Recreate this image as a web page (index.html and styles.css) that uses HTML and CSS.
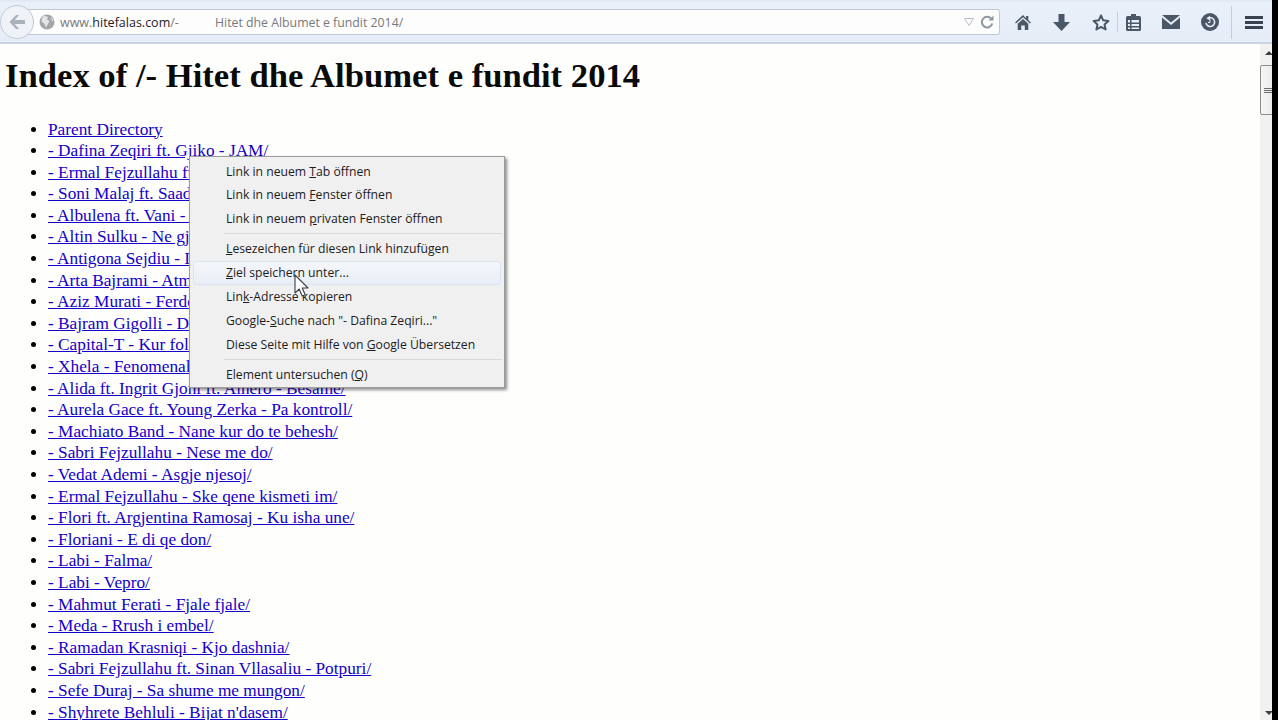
FILE: index.html
```html
<!DOCTYPE html>
<html lang="sq">
<head>
<meta charset="utf-8">
<title>Index of /- Hitet dhe Albumet e fundit 2014</title>
<link rel="stylesheet" href="styles.css">
</head>
<body>
<div class="window">
  <header class="toolbar">
    <button class="back" aria-label="Back">
      <svg width="18" height="16" viewBox="0 0 18 16"><path d="M8 1 1.5 8 8 15h3.200L6.600 10H17V6H6.600l4.600-5z" fill="#a9b1bc"/></svg>
    </button>
    <div class="urlbar">
      <svg class="globe" width="16" height="16" viewBox="0 0 16 16"><circle cx="8" cy="8" r="7.500" fill="#a3a6a9"/><path d="M5 1.500 9 3 8 5.500 10.500 7 9 10l-2 3.500L5.500 10 2.500 7.500 3 4zM12 3l2.500 3-1.500 1.500z" fill="#e2e4e6"/></svg>
      <span class="url"><span class="dim">www.</span>hitefalas.com<span class="dim">/-</span></span>
      <span class="url-rest">Hitet dhe Albumet e fundit 2014/</span>
      <svg class="drop" width="10" height="8" viewBox="0 0 10 8"><path d="M.5.500h9L5 7.500z" fill="none" stroke="#b8bec6"/></svg>
      <svg class="reload" width="14" height="14" viewBox="0 0 14 14"><path d="M11.500 4A5.300 5.300 0 1 0 12.300 8.500" fill="none" stroke="#8f979f" stroke-width="2"/><path d="M8.500 5.500h5v-5z" fill="#8f979f"/></svg>
    </div>
    <div class="tools">
      <svg class="tool tool-home" width="16" height="15" viewBox="0 0 18 17"><path d="M9 0 0 8.500l1 1.200L9 2.500l8 7.200 1-1.200-3-2.800V1h-2.500v2.600zM3 10v7h4v-5h4v5h4v-7L9 4.500z" fill="#4a5767"/></svg>
      <svg class="tool tool-down" width="17" height="17" viewBox="0 0 17 17"><path d="M5.500 0h6v8H17l-8.500 9L0 8h5.500z" fill="#4a5767"/></svg>
      <svg class="tool" width="18" height="17" viewBox="0 0 18 17"><path d="M9 1.500 11.200 6.300l5.200.6-3.900 3.500 1.100 5.100L9 12.900l-4.600 2.600 1.100-5.100L1.600 6.900l5.200-.6z" fill="none" stroke="#4a5767" stroke-width="2" stroke-linejoin="round"/></svg>
      <span class="sep sep-a"></span>
      <svg class="tool tool-clip" width="15" height="17" viewBox="0 0 15 17"><path d="M5 2V0h5v2h3.500q1.500 0 1.500 1.500V15.500q0 1.500-1.500 1.500h-12Q0 17 0 15.500V3.500Q0 2 1.500 2zM2 6v2.500h2V6zm3.500 0v2.500H13V6zM2 10v2h2v-2zm3.500 0v2H13v-2zM2 13.500V15h2v-1.500zm3.500 0V15H13v-1.500z" fill="#4a5767" fill-rule="evenodd"/></svg>
      <svg class="tool" width="18" height="14" viewBox="0 0 18 14"><path d="M0 0h18L9 7.500zM0 2.500V14h18V2.500L9 10z" fill="#4a5767"/></svg>
      <svg class="tool" width="18" height="18" viewBox="0 0 18 18"><circle cx="9" cy="9" r="9" fill="#4a5767"/><path d="M6.300 5.800A4.400 4.400 0 1 1 4.900 10" fill="none" stroke="#e8eef7" stroke-width="1.500"/><path d="M9 2.800v4.600L5.500 5.200z" fill="#e8eef7"/><path d="M9 6.500V9.500H7" fill="none" stroke="#e8eef7"/></svg>
      <span class="sep sep-b"></span>
      <span class="burger"><i></i><i></i><i></i></span>
    </div>
  </header>
  <div class="viewport">
    <main class="page">
      <h1>Index of /- Hitet dhe Albumet e fundit 2014</h1>
      <ul class="listing">
        <li><a href="#">Parent Directory</a></li>
        <li><a href="#">- Dafina Zeqiri ft. Gjiko - JAM/</a></li>
        <li><a href="#">- Ermal Fejzullahu ft. Labi</a></li>
        <li><a href="#">- Soni Malaj ft. Saadiq - Ti</a></li>
        <li><a href="#">- Albulena ft. Vani - Mos</a></li>
        <li><a href="#">- Altin Sulku - Ne gjithe</a></li>
        <li><a href="#">- Antigona Sejdiu - Ika</a></li>
        <li><a href="#">- Arta Bajrami - Atmosfera</a></li>
        <li><a href="#">- Aziz Murati - Ferdez</a></li>
        <li><a href="#">- Bajram Gigolli - Dashni</a></li>
        <li><a href="#">- Capital-T - Kur folim</a></li>
        <li><a href="#">- Xhela - Fenomenale</a></li>
        <li><a href="#">- Alida ft. Ingrit Gjoni ft. Alnero - Besame/</a></li>
        <li><a href="#">- Aurela Gace ft. Young Zerka - Pa kontroll/</a></li>
        <li><a href="#">- Machiato Band - Nane kur do te behesh/</a></li>
        <li><a href="#">- Sabri Fejzullahu - Nese me do/</a></li>
        <li><a href="#">- Vedat Ademi - Asgje njesoj/</a></li>
        <li><a href="#">- Ermal Fejzullahu - Ske qene kismeti im/</a></li>
        <li><a href="#">- Flori ft. Argjentina Ramosaj - Ku isha une/</a></li>
        <li><a href="#">- Floriani - E di qe don/</a></li>
        <li><a href="#">- Labi - Falma/</a></li>
        <li><a href="#">- Labi - Vepro/</a></li>
        <li><a href="#">- Mahmut Ferati - Fjale fjale/</a></li>
        <li><a href="#">- Meda - Rrush i embel/</a></li>
        <li><a href="#">- Ramadan Krasniqi - Kjo dashnia/</a></li>
        <li><a href="#">- Sabri Fejzullahu ft. Sinan Vllasaliu - Potpuri/</a></li>
        <li><a href="#">- Sefe Duraj - Sa shume me mungon/</a></li>
        <li><a href="#">- Shyhrete Behluli - Bijat n'dasem/</a></li>
      </ul>
    </main>
    <aside class="scrollbar">
      <span class="arrow-up"></span>
      <span class="thumb"><i></i><i></i><i></i></span>
      <span class="arrow-down"></span>
    </aside>
  </div>
  <nav class="menu" lang="de">
    <div class="item">Link in neuem <u>T</u>ab öffnen</div>
    <div class="item">Link in neuem <u>F</u>enster öffnen</div>
    <div class="item">Link in neuem <u>p</u>rivaten Fenster öffnen</div>
    <hr class="rule">
    <div class="item"><u>L</u>esezeichen für diesen Link hinzufügen</div>
    <div class="item active"><u>Z</u>iel speichern unter...</div>
    <div class="item">Lin<u>k</u>-Adresse kopieren</div>
    <div class="item">Google-<u>S</u>uche nach "- Dafina Zeqiri..."</div>
    <div class="item">Diese Seite mit Hilfe von <u>G</u>oogle Übersetzen</div>
    <hr class="rule">
    <div class="item">Element untersuchen (<u>Q</u>)</div>
  </nav>
  <svg class="cursor" width="15" height="24" viewBox="0 0 15 24"><path d="M1 1v18l4.200-4 3 7 3-1.300-3-6.700H14z" fill="#fff" stroke="#3c3f44" stroke-width="1.100" stroke-linejoin="round"/></svg>
</div>
</body>
</html>
```
FILE: styles.css
```css
html, body {
  margin: 0;
  height: 720px;
  overflow: hidden;
  background: #000;
}
.window {
  position: relative;
  width: 1272px;
  height: 720px;
  display: flex;
  flex-direction: column;
  background: #fefefd;
  overflow: hidden;
}
.toolbar {
  flex: none;
  height: 44px;
  box-sizing: border-box;
  display: flex;
  align-items: center;
  padding-top: 2px;
  background: linear-gradient(#dfe7f3 0, #e9f0fa 3px, #e6edf8 100%);
  border-bottom: 2px solid #c9d5e4;
}
.back {
  flex: none;
  width: 34px;
  height: 34px;
  padding: 0;
  margin-left: 0;
  border: 1px solid #c3cad4;
  border-radius: 50%;
  background: #eff2f7;
  display: flex;
  align-items: center;
  justify-content: center;
  position: relative;
  z-index: 1;
}
.urlbar {
  flex: none;
  width: 973px;
  height: 26px;
  box-sizing: border-box;
  margin-left: -7px;
  padding: 0 4px 0 12px;
  display: flex;
  align-items: center;
  background: #fdfdfe;
  border: 1px solid #c0c8d3;
  border-left: 0;
  border-radius: 0 3px 3px 0;
  font: 12.3px "Open Sans", "Noto Sans", sans-serif;
  color: #1d2126;
  white-space: nowrap;
}
.globe { flex: none; }
.url { margin-left: 5px; width: 155px; flex: none; font-size: 12.5px; }
.dim { color: #77797c; }
.url-rest { flex: 1; color: #77797c; }
.drop { flex: none; margin-right: 6px; }
.reload { flex: none; margin-right: 1px; }
.tools {
  flex: 1;
  display: flex;
  align-items: center;
  padding-left: 14px;
}
.tool { flex: none; margin-right: 21px; }
.tool-home { margin-left: 1px; margin-right: 22px; }
.tool-down { margin-right: 22px; }
.tool-clip { margin-right: 21.500px; }
.sep {
  flex: none;
  width: 1px;
  background: #c4ced9;
}
.sep-a { height: 20px; margin: 0 7.500px 0 -14px; }
.sep-b { height: 33px; margin: 0 13px 0 -9px; }
.burger {
  flex: none;
  width: 18px;
  display: flex;
  flex-direction: column;
  gap: 2px;
}
.burger i {
  display: block;
  height: 3px;
  background: #39434f;
}
.viewport {
  flex: 1;
  min-height: 0;
  display: flex;
}
.page {
  flex: 1;
  min-width: 0;
  overflow: hidden;
  padding: 0 0 0 5px;
  font-family: "Liberation Serif", "Times New Roman", serif;
  color: #000;
}
h1 {
  margin: 11px 0 0;
  font-size: 34.65px;
  line-height: 40px;
  font-weight: bold;
  color: #0a0a0a;
  white-space: nowrap;
}
.listing {
  margin: 23.500px 0 0;
  padding: 0 0 0 43px;
  font-size: 17.3px;
  line-height: 21.6px;
  white-space: nowrap;
}
.listing a { color: #1400c8; }
.scrollbar {
  flex: none;
  width: 12px;
  position: relative;
  background: #f1f1ef;
  display: flex;
  flex-direction: column;
  overflow: hidden;
}
.arrow-up, .arrow-down {
  position: absolute;
  left: 5px;
  width: 0;
  height: 0;
  border-left: 4px solid transparent;
  border-right: 4px solid transparent;
}
.arrow-up { top: 7px; border-bottom: 4px solid #3e3e3e; }
.arrow-down { bottom: 5px; border-top: 4px solid #3e3e3e; }
.thumb {
  margin-top: 21px;
  height: 50px;
  width: 18px;
  box-sizing: border-box;
  border: 1px solid #8c8c8c;
  border-radius: 2px;
  background: linear-gradient(90deg, #f6f6f6, #e6e6e6);
  display: flex;
  flex-direction: column;
  justify-content: center;
  gap: 1px;
  padding-left: 3px;
}
.thumb i {
  display: block;
  width: 9px;
  height: 1px;
  background: #6b6b6b;
}
.menu {
  position: absolute;
  left: 189px;
  top: 156px;
  width: 316px;
  height: 232px;
  box-sizing: border-box;
  padding: 2.500px 2px;
  background: #f0f0f0;
  border: 1px solid #9d9d9d;
  box-shadow: 2px 2px 3px rgba(0, 0, 0, .45);
  font: 12.2px/23.800px "Open Sans", "Noto Sans", sans-serif;
  color: #1c1c1c;
  white-space: nowrap;
}
.item {
  height: 23.800px;
  padding-left: 34px;
}
.item.active {
  box-sizing: border-box;
  margin: 0 1px;
  padding-left: 32px;
  line-height: 21.800px;
  border: 1px solid #dbe3f2;
  border-radius: 3px;
  background: linear-gradient(#f4f6fa, #e9edf6);
}
.rule {
  height: 1px;
  margin: 2.500px 0 3px 32px;
  border: 0;
  background: #d9d9d9;
}
.cursor {
  position: absolute;
  left: 294px;
  top: 274px;
}
```
